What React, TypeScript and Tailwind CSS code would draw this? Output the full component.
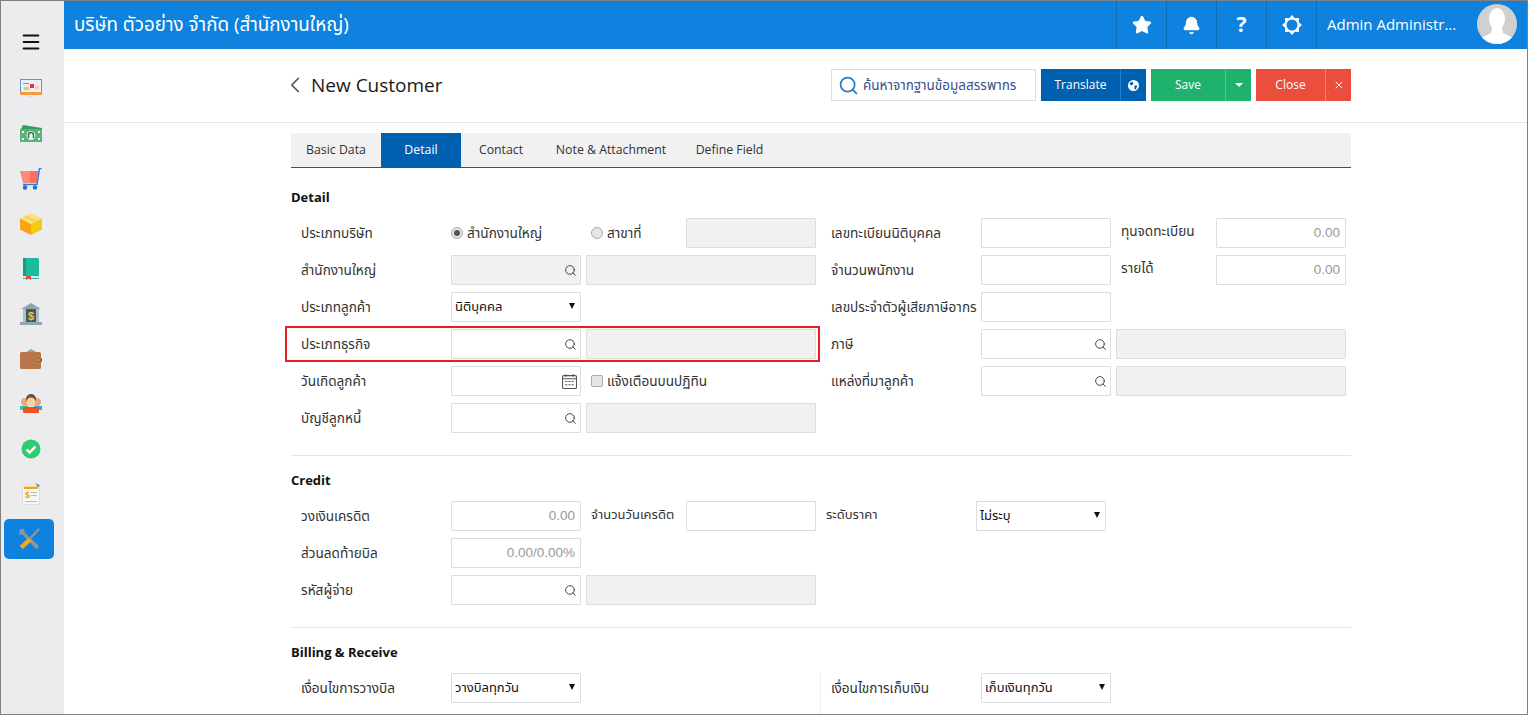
import { Search, Star, Bell, ChevronLeft, X, Menu } from 'lucide-react'

const FONT = "font-['Open_Sans','Noto_Sans','Noto_Sans_Thai','Tahoma','DejaVu_Sans',sans-serif]"

function Sidebar() {
    const icons = [
        <svg viewBox="0 0 22 20" className="w-[22px] h-[20px]">
            <rect x="0" y="0" width="22" height="16" fill="#5b9bd5" />
            <rect x="1" y="1" width="20" height="12" fill="#eceff1" />
            <rect x="0" y="13" width="22" height="3" fill="#f39c3d" />
            <rect x="10" y="5" width="4" height="4" fill="#e53935" />
            <rect x="3" y="4" width="6" height="1" fill="#4db6ac" />
            <rect x="4" y="8" width="5" height="3" fill="#f5c26b" />
            <rect x="15" y="7" width="4" height="3" fill="#f8c9c0" />
            <rect x="8" y="17" width="6" height="1" fill="#cfe3ea" />
        </svg>,
        <svg viewBox="0 0 22 18" className="w-[22px] h-[18px]">
            <path d="M1 4 L3 0 L22 3 L22 6 Z" fill="#2f9e5f" />
            <rect x="0" y="4" width="22" height="13" fill="#58b27a" />
            <circle cx="11" cy="10.5" r="4.5" fill="#eaf5ee" />
            <path d="M8.5 13 V10 A2.5 2.5 0 0 1 13.5 10 V13" fill="none" stroke="#2f7d4f" strokeWidth="1.6" />
            <rect x="2" y="6" width="2" height="2" fill="#eaf5ee" />
            <rect x="18" y="6" width="2" height="2" fill="#eaf5ee" />
            <rect x="2" y="13" width="2" height="2" fill="#eaf5ee" />
            <rect x="18" y="13" width="2" height="2" fill="#eaf5ee" />
        </svg>,
        <svg viewBox="0 0 22 22" className="w-[22px] h-[22px]">
            <path d="M0 3 H10 L10 15 H3 Z" fill="#ff8a75" />
            <path d="M10 3 H18.5 L16.5 15 H10 Z" fill="#ff6f5c" />
            <path d="M21.5 0.5 H19.5 L17 16.5 H3" fill="none" stroke="#2a7de1" strokeWidth="1.5" />
            <circle cx="5" cy="19.5" r="2.2" fill="#1f6fd6" />
            <circle cx="15" cy="19.5" r="2.2" fill="#1f6fd6" />
        </svg>,
        <svg viewBox="0 0 22 22" className="w-[22px] h-[22px]">
            <path d="M11 0 L22 5.5 L11 11 L0 5.5 Z" fill="#fde27a" />
            <path d="M0 5.5 L11 11 V22 L0 16.5 Z" fill="#f7a416" />
            <path d="M22 5.5 L11 11 V22 L22 16.5 Z" fill="#f4c90f" />
            <path d="M5 3 L16 8.5" stroke="#f3cf6a" strokeWidth="2" />
        </svg>,
        <svg viewBox="0 0 18 22" className="w-[18px] h-[22px]">
            <rect x="1" y="0" width="16" height="21" rx="1.5" fill="#1abc9c" />
            <rect x="1" y="0" width="3" height="21" fill="#169e83" />
            <rect x="1" y="18" width="16" height="2" fill="#d8efe9" />
            <rect x="1" y="20" width="16" height="1" fill="#3cab8f" />
            <path d="M4 18 H9 V22 L6.5 20.5 L4 22 Z" fill="#e74c3c" />
        </svg>,
        <svg viewBox="0 0 22 22" className="w-[22px] h-[22px]">
            <path d="M11 0 L21 6 H1 Z" fill="#90a4ae" />
            <rect x="3" y="6" width="16" height="13" fill="#b0bec5" />
            <rect x="6" y="6" width="10" height="13" fill="#455a64" />
            <rect x="0" y="19" width="22" height="3" fill="#90a4ae" />
            <text x="11" y="16.5" textAnchor="middle" fontSize="11" fontWeight="700" fill="#f4c430" fontFamily="Liberation Sans">$</text>
        </svg>,
        <svg viewBox="0 0 22 20" className="w-[22px] h-[20px]">
            <path d="M5 4 L11 0 L18 4 Z" fill="#62b8a0" />
            <rect x="0" y="3" width="21" height="17" rx="1.5" fill="#b9764a" />
            <rect x="18" y="9" width="4" height="4" rx="1" fill="#8f5a35" />
            <circle cx="19.5" cy="11" r="1" fill="#f1c40f" />
        </svg>,
        <svg viewBox="0 0 22 20" className="w-[22px] h-[20px]">
            <rect x="0" y="12" width="8" height="4" fill="#1fd1a5" />
            <rect x="14" y="12" width="8" height="4" fill="#29a9ea" />
            <circle cx="5" cy="8" r="4" fill="#e8a77c" />
            <circle cx="17" cy="8" r="4" fill="#e8a77c" />
            <circle cx="11" cy="5" r="5" fill="#6d4c41" />
            <circle cx="11" cy="8" r="4.5" fill="#ffd0a1" />
            <rect x="3" y="13" width="16" height="6" rx="1" fill="#f4511e" />
        </svg>,
        <svg viewBox="0 0 20 20" className="w-[20px] h-[20px]">
            <circle cx="10" cy="10" r="9.5" fill="#2ecc71" />
            <path d="M5.5 10.5 L8.7 13.5 L14.5 7.5" fill="none" stroke="#f4f4f4" strokeWidth="2.6" />
        </svg>,
        <svg viewBox="0 0 20 22" className="w-[20px] h-[22px]">
            <rect x="1.5" y="1.5" width="17" height="20" fill="#f6f5f2" stroke="#dddddd" />
            <rect x="3" y="3.5" width="14" height="2.5" fill="#f5a623" />
            <path d="M15 0 L19 3 L16 4 Z" fill="#4a90c2" />
            <text x="6.5" y="15" textAnchor="middle" fontSize="9" fontWeight="700" fill="#e8a317" fontFamily="Liberation Sans">$</text>
            <rect x="10" y="9" width="6" height="1" fill="#bdbdbd" />
            <rect x="10" y="12" width="6" height="1" fill="#bdbdbd" />
            <rect x="4" y="18" width="12" height="1" fill="#bdbdbd" />
        </svg>,
    ]
    return (
        <div className="w-[63px] shrink-0 bg-[#ececee] flex flex-col">
            <div className="h-[65px] flex items-end justify-center pr-[3px] pb-[13px]">
                <Menu className="w-[22px] h-[22px] text-[#111]" strokeWidth={2.2} />
            </div>
            {icons.map((icon, i) => (
                <div key={i} className="h-[45px] flex items-center justify-center pr-[3px]">{icon}</div>
            ))}
            <div className="h-[45px] flex items-center">
                <div className="ml-[3px] w-[50px] h-[40px] rounded-[5px] bg-[#0e82de] flex items-center justify-center">
                    <svg viewBox="0 0 22 22" className="w-[22px] h-[22px]">
                        <path d="M2 1 L6 1 L7 5 L20 17 A2 2 0 0 1 17 20 L5 7 L1 6 Z" fill="#8c979c" />
                        <path d="M21 1 L12.5 10" stroke="#8c979c" strokeWidth="2.2" />
                        <path d="M10.5 10 L13.5 13 L5 21 L1.5 18 Z" fill="#f4a81d" />
                    </svg>
                </div>
            </div>
        </div>
    )
}

function Header() {
    const cell = "w-[50px] h-full border-l border-[#0b6cba] flex items-center justify-center text-white"
    return (
        <div className="h-[48px] bg-[#0e82de] flex items-center text-white shrink-0">
            <div className="flex-1 pl-[10px] text-[18.8px] whitespace-nowrap -mt-[2px]">บริษัท ตัวอย่าง จำกัด (สำนักงานใหญ่)</div>
            <div className={cell}><Star className="w-[20px] h-[20px]" fill="white" /></div>
            <div className={cell}><Bell className="w-[19px] h-[19px]" fill="white" /></div>
            <div className={cell}><span className="text-[21px] font-bold">?</span></div>
            <div className={cell}>
                <svg viewBox="0 0 20 20" className="w-[20px] h-[20px]">
                    <path d="M10 0 L12.8 3.2 L17 3 L16.8 7.2 L20 10 L16.8 12.8 L17 17 L12.8 16.8 L10 20 L7.2 16.8 L3 17 L3.2 12.8 L0 10 L3.2 7.2 L3 3 L7.2 3.2 Z" fill="white" />
                    <circle cx="10" cy="10" r="5.5" fill="#0e82de" />
                </svg>
            </div>
            <div className="w-[211px] h-full border-l border-[#0b6cba] flex items-center pl-[10px]">
                <span className="text-[15px] w-[140px] whitespace-nowrap -mt-[2px]">Admin Administr...</span>
                <div className="w-[40px] h-[40px] rounded-full bg-[#d0d0d0] overflow-hidden ml-[10px] -mt-[2px]">
                    <svg viewBox="0 0 40 40" className="w-[40px] h-[40px]">
                        <ellipse cx="20" cy="15" rx="8" ry="11" fill="white" />
                        <path d="M15 24 L25 24 L26 29 L36 34 V40 H4 V34 L14 29 Z" fill="white" />
                    </svg>
                </div>
            </div>
        </div>
    )
}

function PageHead() {
    return (
        <div className="h-[74px] border-b border-[#e5e5e5] shrink-0 pl-[227px] pr-[176px] flex items-center pb-[1px]">
            <ChevronLeft className="w-[26px] h-[26px] -ml-[9px] text-[#555]" strokeWidth={1.6} />
            <div className="ml-[3px] text-[19px] text-[#1a1a1a] flex-1 whitespace-nowrap">New Customer</div>
            <div className="w-[205px] h-[32px] border border-[#ddd] flex items-center pl-[6px] text-[13.5px] text-[#34518c] whitespace-nowrap">
                <Search className="w-[21px] h-[21px] text-[#2f7cc0] mr-[4px]" strokeWidth={2} />
                ค้นหาจากฐานข้อมูลสรรพากร
            </div>
            <div className="ml-[5px] w-[105px] h-[32px] bg-[#0060b0] text-white text-[12px] font-medium flex">
                <div className="flex-1 flex items-center justify-center border-r border-[#1f7fd0]">Translate</div>
                <div className="w-[25px] flex items-center justify-center">
                    <svg viewBox="0 0 12 12" className="w-[11px] h-[11px]">
                        <circle cx="6" cy="6" r="6" fill="white" />
                        <path d="M2 3 L5 2 L6 4 L4 6 L2 5 Z M7 6 L10 6 L9 10 L7 10 Z" fill="#0060b0" />
                    </svg>
                </div>
            </div>
            <div className="ml-[5px] w-[100px] h-[32px] bg-[#1fb26d] text-white text-[12px] font-medium flex">
                <div className="flex-1 flex items-center justify-center border-r border-[#4fcb90]">Save</div>
                <div className="w-[25px] flex items-center justify-center">
                    <div className="border-x-[4px] border-x-transparent border-t-[4px] border-t-white" />
                </div>
            </div>
            <div className="ml-[5px] w-[95px] h-[32px] bg-[#ec4e3d] text-white text-[12px] font-medium flex">
                <div className="flex-1 flex items-center justify-center border-r border-[#f57f72]">Close</div>
                <div className="w-[25px] flex items-center justify-center"><X className="w-[12px] h-[12px] text-white" strokeWidth={2} /></div>
            </div>
        </div>
    )
}

function Tabs() {
    const tabs = [
        { label: 'Basic Data', w: 'w-[90px]' },
        { label: 'Detail', w: 'w-[80px]', active: true },
        { label: 'Contact', w: 'w-[80px]' },
        { label: 'Note & Attachment', w: 'w-[140px]' },
        { label: 'Define Field', w: 'w-[97px]' },
    ]
    return (
        <div className="mt-[10px] h-[35px] bg-[#f1f1f1] border-b border-[#0060b0] flex text-[12.3px] text-[#333]">
            {tabs.map((t) => (
                <div key={t.label} className={`${t.w} flex items-center justify-center ${t.active ? 'bg-[#0060b0] text-white' : ''}`}>{t.label}</div>
            ))}
        </div>
    )
}

function Label({ children, w = 'w-[150px]' }: { children: React.ReactNode; w?: string }) {
    return <div className={`${w} shrink-0 text-[13.6px] text-[#333] whitespace-nowrap`}>{children}</div>
}

function SideLabel({ children, w, small }: { children: React.ReactNode; w: string; small?: boolean }) {
    return <div className={`${w} pl-[10px] -mt-[3px] shrink-0 ${small ? 'text-[13px]' : 'text-[13.6px]'} text-[#333] whitespace-nowrap`}>{children}</div>
}

function Box({ w = 'w-[130px]', gray, value, icon, ml }: { w?: string; gray?: boolean; value?: string; icon?: 'search' | 'cal'; ml?: string }) {
    return (
        <div className={`${w} ${ml ?? ''} h-[30px] shrink-0 border border-[#ddd] rounded-[1px] flex items-center justify-end ${value ? 'pr-[5px]' : 'pr-[3px]'} font-['Liberation_Sans',sans-serif] text-[13.5px] text-[#999] ${gray ? 'bg-[#f1f1f1]' : 'bg-white'}`}>
            {value}
            {icon === 'search' && <Search className="w-[13px] h-[13px] text-[#444]" strokeWidth={1.8} />}
            {icon === 'cal' && (
                <svg viewBox="0 0 14 14" className="w-[15px] h-[15px]" fill="none" stroke="#555" strokeWidth="1">
                    <rect x="0.5" y="1.5" width="13" height="12" rx="1" />
                    <path d="M0.5 4.5 H13.5 M3.5 0 V2.5 M10.5 0 V2.5 M3 7 H5 M6 7 H8 M9 7 H11 M3 10 H5 M6 10 H8 M9 10 H11" />
                </svg>
            )}
        </div>
    )
}

function Select({ value }: { value: string }) {
    return (
        <div className="w-[130px] h-[30px] shrink-0 border border-[#ddd] rounded-[1px] bg-white flex items-center justify-between pl-[3px] pr-[5px] text-[13px] text-[#111]">
            <span className="whitespace-nowrap">{value}</span>
            <span className="border-x-[3.5px] border-x-transparent border-t-[6px] border-t-[#111] -mt-[3px]" />
        </div>
    )
}

function Row({ left, right }: { left: React.ReactNode; right?: React.ReactNode }) {
    return (
        <div className="flex items-center h-[30px] mb-[7px]">
            <div className="w-[530px] shrink-0 pl-[10px] flex items-center">{left}</div>
            <div className="pl-[10px] flex items-center">{right}</div>
        </div>
    )
}

function Radio({ checked }: { checked?: boolean }) {
    return (
        <span className="w-[12px] h-[12px] rounded-full border border-[#aaa] bg-[#e6e6e6] flex items-center justify-center shrink-0 mr-[4px]">
            {checked && <span className="w-[6px] h-[6px] rounded-full bg-[#555]" />}
        </span>
    )
}

function Title({ children }: { children: React.ReactNode }) {
    return <div className="text-[13px] font-bold text-[#111] leading-[18px]">{children}</div>
}

function App() {
    return (
        <div className={`${FONT} w-[1528px] h-[715px] overflow-hidden flex bg-white border border-[#808080]`}>
            <Sidebar />
            <div className="flex-1 flex flex-col min-w-0">
                <Header />
                <PageHead />
                <div className="pl-[227px] pr-[176px]">
                    <Tabs />

                    <div className="mt-[20px] mb-[12px]"><Title>Detail</Title></div>
                    <Row
                        left={<>
                            <Label>ประเภทบริษัท</Label>
                            <div className="w-[140px] flex items-center text-[13.6px] text-[#333] whitespace-nowrap"><Radio checked />สำนักงานใหญ่</div>
                            <div className="w-[95px] flex items-center text-[13.6px] text-[#333] whitespace-nowrap"><Radio />สาขาที่</div>
                            <Box gray />
                        </>}
                        right={<>
                            <Label>เลขทะเบียนนิติบุคคล</Label>
                            <Box />
                            <SideLabel w="w-[105px]">ทุนจดทะเบียน</SideLabel>
                            <Box value="0.00" />
                        </>}
                    />
                    <Row
                        left={<>
                            <Label>สำนักงานใหญ่</Label>
                            <Box gray icon="search" />
                            <Box gray w="w-[230px]" ml="ml-[5px]" />
                        </>}
                        right={<>
                            <Label>จำนวนพนักงาน</Label>
                            <Box />
                            <SideLabel w="w-[105px]">รายได้</SideLabel>
                            <Box value="0.00" />
                        </>}
                    />
                    <Row
                        left={<><Label>ประเภทลูกค้า</Label><Select value="นิติบุคคล" /></>}
                        right={<><Label>เลขประจำตัวผู้เสียภาษีอากร</Label><Box /></>}
                    />
                    <div className="relative">
                        <div className="absolute left-[-6px] top-[-3px] w-[535px] h-[36px] border-2 border-[#ec1c24]" />
                        <Row
                            left={<>
                                <Label>ประเภทธุรกิจ</Label>
                                <Box icon="search" />
                                <Box gray w="w-[230px]" ml="ml-[5px]" />
                            </>}
                            right={<>
                                <Label>ภาษี</Label>
                                <Box icon="search" />
                                <Box gray w="w-[230px]" ml="ml-[5px]" />
                            </>}
                        />
                    </div>
                    <Row
                        left={<>
                            <Label>วันเกิดลูกค้า</Label>
                            <Box icon="cal" />
                            <div className="ml-[10px] flex items-center text-[13.6px] text-[#333] whitespace-nowrap">
                                <span className="w-[12px] h-[12px] rounded-[2px] border border-[#aaa] bg-[#e6e6e6] mr-[4px]" />
                                แจ้งเตือนบนปฏิทิน
                            </div>
                        </>}
                        right={<>
                            <Label>แหล่งที่มาลูกค้า</Label>
                            <Box icon="search" />
                            <Box gray w="w-[230px]" ml="ml-[5px]" />
                        </>}
                    />
                    <Row
                        left={<>
                            <Label>บัญชีลูกหนี้</Label>
                            <Box icon="search" />
                            <Box gray w="w-[230px]" ml="ml-[5px]" />
                        </>}
                    />

                    <div className="mt-[22px] border-t border-[#e5e5e5] pt-[15px] mb-[12px]"><Title>Credit</Title></div>
                    <div className="flex items-center h-[30px] mb-[7px] pl-[10px]">
                        <Label>วงเงินเครดิต</Label>
                        <Box value="0.00" />
                        <SideLabel w="w-[105px]" small>จำนวนวันเครดิต</SideLabel>
                        <Box />
                        <SideLabel w="w-[160px]" small>ระดับราคา</SideLabel>
                        <Select value="ไม่ระบุ" />
                    </div>
                    <Row left={<><Label>ส่วนลดท้ายบิล</Label><Box value="0.00/0.00%" /></>} />
                    <Row
                        left={<>
                            <Label>รหัสผู้จ่าย</Label>
                            <Box icon="search" />
                            <Box gray w="w-[230px]" ml="ml-[5px]" />
                        </>}
                    />

                    <div className="mt-[22px] border-t border-[#e5e5e5] pt-[15px] mb-[12px]"><Title>Billing &amp; Receive</Title></div>
                    <div className="flex items-start h-[41px]">
                        <div className="w-[529px] shrink-0 pl-[10px] flex items-center"><Label>เงื่อนไขการวางบิล</Label><Select value="วางบิลทุกวัน" /></div>
                        <div className="pl-[10px] border-l border-[#eee] h-full">
                            <div className="flex items-center h-[30px]"><Label>เงื่อนไขการเก็บเงิน</Label><Select value="เก็บเงินทุกวัน" /></div>
                        </div>
                    </div>
                </div>
            </div>
        </div>
    )
}

export default App
